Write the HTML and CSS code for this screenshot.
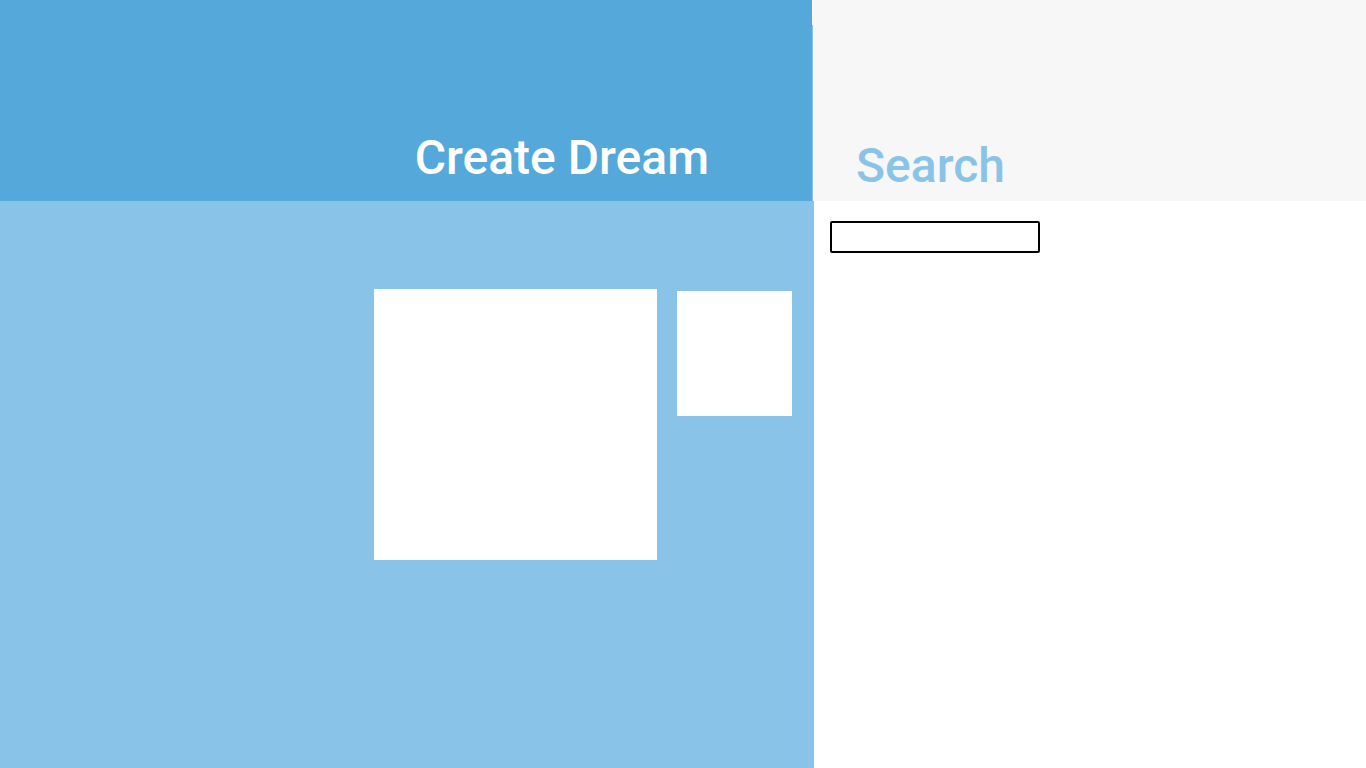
FILE: index.html
```html
<!DOCTYPE html>
<html>
<head>
<meta charset="utf-8">
<link rel="stylesheet" href="styles.css">
</head>
<body>
<div class="app">
  <section class="create">
    <header class="create-head"><h1 class="create-title">Create Dream</h1></header>
    <div class="create-body">
      <div class="card card-big"></div>
      <div class="card card-small"></div>
    </div>
  </section>
  <section class="search">
    <header class="search-head"><h2 class="search-title">Search</h2></header>
    <div class="search-body">
      <input class="search-input" type="text">
    </div>
  </section>
</div>
</body>
</html>
```
FILE: styles.css
```css
html, body { margin: 0; padding: 0; height: 100%; }
body { font-family: Roboto, "Noto Sans", sans-serif; background: #fff; }
.app { display: flex; height: 768px; }
.create { width: 814px; display: flex; flex-direction: column; background: #f7f7f7; }
.create-head {
  width: 813px; height: 201px;
  background:
    linear-gradient(to bottom, #f7f7f7 25px, #89c4e8 25px) right top / 1px 100% no-repeat,
    #55a8da;
  display: flex; justify-content: flex-end; align-items: flex-end;
  padding-right: 104px; box-sizing: border-box;
}
.create-title {
  margin: 0 0 15px 0; color: #fff; font-size: 48px; font-weight: 500; line-height: 56px;
}
.create-body {
  flex: 1; background: #89c4e8;
  display: flex; justify-content: flex-end; align-items: flex-start;
  padding: 88px 22px 0 0; gap: 20px;
}
.card { background: #fff; }
.card-big { width: 283px; height: 271px; }
.card-small { width: 115px; height: 125px; margin-top: 2px; }
.search { flex: 1; display: flex; flex-direction: column; }
.search-head {
  height: 201px; background: #f7f7f7;
  display: flex; align-items: flex-end; padding-left: 42px;
}
.search-title {
  margin: 0 0 7px 0; color: #89c4e8; font-size: 48px; font-weight: 500; line-height: 56px;
}
.search-body { padding: 20px 16px; }
.search-input {
  display: block; width: 210px; height: 32px; box-sizing: border-box;
  border: 2px solid #000; border-radius: 2px; margin: 0; padding: 0 4px;
  background: #fff; font-family: Roboto, sans-serif; outline: none;
}
```
